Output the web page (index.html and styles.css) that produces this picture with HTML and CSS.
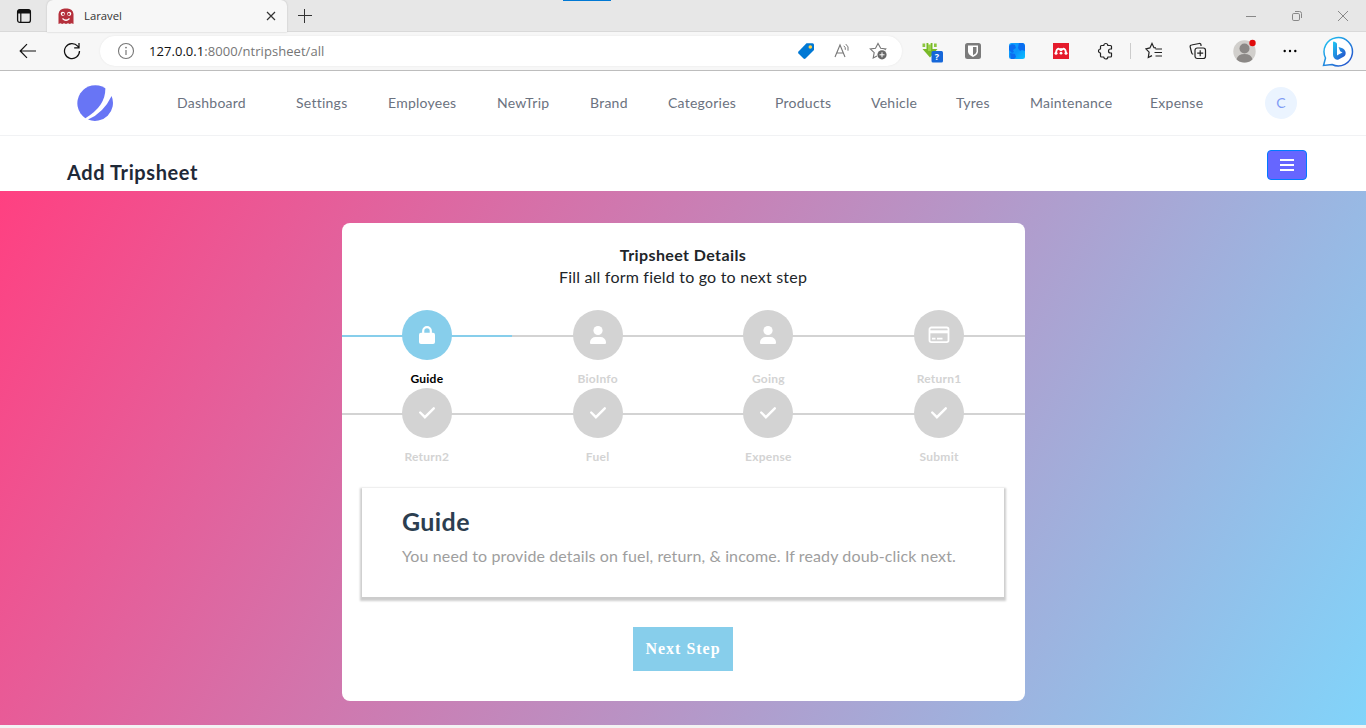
FILE: index.html
```html
<!DOCTYPE html>
<html lang="en">
<head>
<meta charset="utf-8">
<title>Laravel</title>
<link rel="stylesheet" href="styles.css">
</head>
<body>
<div class="browser">
  <div class="tabstrip">
    <span class="load-mark"></span>
    <svg class="workspace" width="16" height="16" viewBox="0 0 16 16"><rect x="1.6" y="1.6" width="12.8" height="12.8" rx="2.2" fill="none" stroke="#111" stroke-width="1.3"/><path d="M1.5 5.5V3.5a2 2 0 0 1 2-2h9a2 2 0 0 1 2 2v2z" fill="#111"/><path d="M4.8 5v9.5" stroke="#111" stroke-width="1.2"/></svg>
    <div class="tab">
      <svg width="16" height="17" viewBox="0 0 16 17"><path d="M.5 16V6A6 6 0 0 1 6.500.5h3A6 6 0 0 1 15.500 6v10l-2-.8-1.700.8-1.800-.8-2 .8-2-.8-1.800.8-1.700-.8z" fill="#b5303c"/><circle cx="4.800" cy="5.800" r="2.100" fill="#fff"/><circle cx="11.200" cy="5.800" r="2.100" fill="#fff"/><circle cx="5.200" cy="6.200" r="1.100" fill="#b5303c"/><circle cx="10.800" cy="6.200" r="1.100" fill="#b5303c"/><path d="M4.500 10.500q3.500 3.500 7 0" fill="none" stroke="#fff" stroke-width="1.200"/></svg>
      <span class="tab-title">Laravel</span>
      <svg class="tab-close" width="10" height="10" viewBox="0 0 10 10"><path d="M1 1l8 8M9 1L1 9" stroke="#333" stroke-width="1.200"/></svg>
    </div>
    <svg class="new-tab" width="16" height="16" viewBox="0 0 16 16"><path d="M1 7.500h14M7.500 1v14" stroke="#333" stroke-width="1"/></svg>
    <div class="window-buttons">
      <svg width="12" height="12" viewBox="0 0 12 12"><path d="M1 6.500h10" stroke="#888"/></svg>
      <svg width="12" height="12" viewBox="0 0 12 12"><rect x="1.500" y="3.500" width="7" height="7" rx="1.300" fill="none" stroke="#888"/><path d="M4 1.500h4.500a2 2 0 0 1 2 2V8" fill="none" stroke="#888"/></svg>
      <svg width="12" height="12" viewBox="0 0 12 12"><path d="M1 1l10 10M11 1L1 11" stroke="#888"/></svg>
    </div>
  </div>
  <div class="toolbar">
    <svg class="back" width="18" height="16" viewBox="0 0 18 16"><path d="M17 8H1.500M8 1.200L1.200 8 8 14.800" fill="none" stroke="#111" stroke-width="1.200"/></svg>
    <svg class="reload" width="18" height="18" viewBox="0 0 18 18"><path d="M16.500 9A7.500 7.500 0 1 1 14.700 4.200L16 5.600M16 1v4.800h-4.800" fill="none" stroke="#111" stroke-width="1.250"/></svg>
    <div class="address">
      <svg width="18" height="18" viewBox="0 0 18 18"><circle cx="9" cy="9" r="7.500" fill="none" stroke="#777" stroke-width="1.100"/><path d="M9 8v5" stroke="#777" stroke-width="1.200"/><circle cx="9" cy="5.600" r=".9" fill="#777"/></svg>
      <span class="url"><b>127.0.0.1</b>:8000/ntripsheet/all</span>
      <div class="address-icons">
        <svg width="18" height="18" viewBox="0 0 18 18"><path d="M1.500 9.500L9.500 1.300H15.500a1.500 1.500 0 0 1 1.500 1.500V8L8.500 16.500a1.500 1.500 0 0 1-2 0l-5-5a1.500 1.500 0 0 1 0-2z" fill="#0078d4"/><circle cx="13.300" cy="5" r="1.800" fill="#ffd24a"/></svg>
        <svg width="18" height="18" viewBox="0 0 18 18"><path d="M2 15L7 3l5 12M3.800 11h6.500" fill="none" stroke="#777" stroke-width="1.100"/><path d="M10.800 3.800q2 1.500 1.500 4M12.800 2.100q3.300 2.300 2.200 6.600" fill="none" stroke="#777"/></svg>
        <svg width="18" height="18" viewBox="0 0 18 18"><path d="M15.700 8l1-1-5-.700L9 1.500 6.500 6.300l-5.200.7 3.900 3.600-1 5.400 3.800-2" fill="none" stroke="#777" stroke-width="1.100"/><circle cx="13" cy="12.800" r="4.600" fill="#666"/><path d="M10.500 12.800h5M13 10.300v5" stroke="#fff"/></svg>
      </div>
    </div>
    <div class="extensions">
      <svg width="24" height="24" viewBox="0 0 24 24"><path d="M6.500 4h6v6h5L10 18.500 2.500 10h4z" fill="#79b928"/><path d="M8 4h3v8H8z" fill="#9bd34c"/><path d="M2.500 4.500h2.700V8H2.500zM14 4.500h2.700V8H14z" fill="#8cc63f"/><path d="M8.500 4h2v1.500h-2z" fill="#fff"/><rect x="11.500" y="12" width="11.500" height="11.500" rx="1.500" fill="#1667d9"/><text x="14.700" y="21.300" class="badge-text">?</text></svg>
      <svg width="16" height="16" viewBox="0 0 16 16"><rect width="16" height="16" rx="2.500" fill="#7b7b7b"/><path d="M3 2.500h10v6q0 3.300-5 5.500-5-2.200-5-5.500z" fill="#fff"/><path d="M8 4h3.500v4.500Q11.500 10.500 8 12.300z" fill="#7b7b7b"/></svg>
      <svg width="16" height="16" viewBox="0 0 16 16"><defs><linearGradient id="sea" x2="1" y2="1"><stop stop-color="#12a8ff"/><stop offset=".5" stop-color="#0a93fb"/><stop offset="1" stop-color="#0cc0ff"/></linearGradient></defs><rect width="16" height="16" rx="2.500" fill="url(#sea)"/><path d="M0 3l3-2 3 1 1 3-3 2 1 2-2 1-3-3zM10 0h4l2 3v5l-3-1-2 1-2-3zM1 10l5 1 1 3-2 2H2z" fill="#0a6df0"/></svg>
      <svg width="16" height="16" viewBox="0 0 16 16"><path d="M0 0h16v16H0z" fill="#e51b2c"/><path d="M3 10q.3-4 2.500-4.300L8 7l2.500-1.300Q12.700 6 13 10" fill="none" stroke="#fff" stroke-width="1.800"/><circle cx="8" cy="6.500" r="1.500" fill="#fff"/><circle cx="3" cy="10.200" r="1.500" fill="#fff"/><circle cx="8" cy="10.200" r="1.400" fill="#fff"/><circle cx="13" cy="10.200" r="1.500" fill="#fff"/></svg>
      <svg class="puzzle" width="18" height="18" viewBox="0 0 18 18"><path d="M4.500 3.500h2.300a2 2 0 0 1 4 0h2.700a1 1 0 0 1 1 1V7h-1a2 2 0 0 0 0 4h1v3a1 1 0 0 1-1 1h-2.700a2 2 0 0 1-4 0H4.500a1 1 0 0 1-1-1v-3a2 2 0 0 1 0-4V4.500a1 1 0 0 1 1-1z" fill="none" stroke="#222" stroke-width="1.200" stroke-linejoin="round"/></svg>
      <span class="divider"></span>
      <svg width="18" height="18" viewBox="0 0 18 18"><path d="M11 5.900L9 5.700 7 1.500 4.900 5.900.9 6.800l3.200 3.400-.8 5.300L7 13.600M10.500 7H17M9.500 10.500H17M10.500 14H17" fill="none" stroke="#222" stroke-width="1.200"/></svg>
      <svg width="18" height="18" viewBox="0 0 18 18"><path d="M12 4V3a1.500 1.500 0 0 0-1.800-1.500L2.500 3A1.500 1.500 0 0 0 1.200 5l1.500 6a1.500 1.500 0 0 0 1.500 1.200" fill="none" stroke="#222" stroke-width="1.200"/><rect x="6" y="6" width="10.500" height="10.500" rx="2.200" fill="none" stroke="#222" stroke-width="1.200"/><path d="M8.200 11.200h6M11.200 8.200v6" stroke="#222" stroke-width="1.200"/></svg>
      <svg width="24" height="24" viewBox="0 0 24 24"><circle cx="11.500" cy="12.500" r="11.200" fill="#d1cfcc"/><circle cx="11.500" cy="9.500" r="5" fill="#8b8886"/><path d="M3.500 20.300q1.500-5.300 8-5.300t8 5.300q-3 3.300-8 3.300t-8-3.300z" fill="#8b8886"/><circle cx="19.500" cy="4" r="3.200" fill="#e00b0b"/></svg>
      <svg class="more" width="16" height="16" viewBox="0 0 16 16"><circle cx="2.700" cy="8" r="1.200"/><circle cx="8" cy="8" r="1.200"/><circle cx="13.300" cy="8" r="1.200"/></svg>
      <svg class="bing" width="32" height="32" viewBox="0 0 32 32"><defs><linearGradient id="bing" x2="1" y2="1"><stop stop-color="#20c9f4"/><stop offset="1" stop-color="#2548c8"/></linearGradient></defs><path d="M1.500 30.500L3.500 23A14.200 14.200 0 1 1 10 29.500z" fill="#fff" stroke="url(#bing)" stroke-width="1.500"/><path d="M11 7.500q0-1.500 1.500-.8l1.500.8q1 .5 1 1.500v11.500l2.500-1.500 3-1.500-2.300-1.200-1.700-4.300q5.500 1 6.800 4.200 1.200 3.300-1.300 5.300L17 24.300q-2 1.200-4-.3-2-1.500-2-4z" fill="url(#bing)"/></svg>
    </div>
  </div>
</div>

<nav class="navbar">
  <svg class="brand" width="36" height="36" viewBox="0 0 36 36"><path d="M8.400 33.200A18 18 0 1 1 28.300 3.200Q29 21 8.400 33.200z" fill="#6875f5"/><path d="M34.600 11A18 18 0 0 1 11 34.500Q26.500 28 34.600 11z" fill="#6875f5"/></svg>
  <div class="nav-links">
    <a class="w-dashboard">Dashboard</a><a class="w-settings">Settings</a><a class="w-employees">Employees</a><a class="w-newtrip">NewTrip</a><a class="w-brand">Brand</a><a class="w-categories">Categories</a><a class="w-products">Products</a><a class="w-vehicle">Vehicle</a><a class="w-tyres">Tyres</a><a class="w-maintenance">Maintenance</a><a class="w-expense">Expense</a>
  </div>
  <span class="avatar">C</span>
</nav>
<header class="page-header">
  <h1>Add Tripsheet</h1>
  <button class="menu-button"><svg width="14" height="12" viewBox="0 0 14 12"><path d="M0 1h14M0 6h14M0 11h14" stroke="#fff" stroke-width="2"/></svg></button>
</header>
<main class="stage">
  <section class="card">
    <h2>Tripsheet Details</h2>
    <p class="hint">Fill all form field to go to next step</p>
    <ul class="steps">
      <li class="active"><span class="dot"><svg width="18" height="20" viewBox="0 0 18 20"><path d="M5.200 9V6a3.800 3.800 0 0 1 7.600 0v3" fill="none" stroke="#fff" stroke-width="2.200"/><rect x="1" y="7.800" width="16" height="11.200" rx="2" fill="#fff"/></svg></span><span>Guide</span></li>
      <li><span class="dot"><svg width="18" height="20" viewBox="0 0 18 20"><circle cx="9" cy="5.500" r="4.600" fill="#fff"/><path d="M1 18v-1a5.500 5.500 0 0 1 5.500-5h5a5.500 5.500 0 0 1 5.500 5v1a1 1 0 0 1-1 1H2a1 1 0 0 1-1-1z" fill="#fff"/></svg></span><span>BioInfo</span></li>
      <li><span class="dot"><svg width="18" height="20" viewBox="0 0 18 20"><circle cx="9" cy="5.500" r="4.600" fill="#fff"/><path d="M1 18v-1a5.500 5.500 0 0 1 5.500-5h5a5.500 5.500 0 0 1 5.500 5v1a1 1 0 0 1-1 1H2a1 1 0 0 1-1-1z" fill="#fff"/></svg></span><span>Going</span></li>
      <li><span class="dot"><svg width="22" height="20" viewBox="0 0 22 20"><rect x="1.500" y="2.500" width="19" height="14.600" rx="1.800" fill="none" stroke="#fff" stroke-width="1.800"/><path d="M1.500 6.800h19" stroke="#fff" stroke-width="3"/><path d="M4 13.600h3.500M9 13.600h5.500" stroke="#fff" stroke-width="1.800"/></svg></span><span>Return1</span></li>
      <li><span class="dot"><svg width="18" height="20" viewBox="0 0 18 20"><path d="M2.200 9.500l4.700 4.700L15.800 5.300" fill="none" stroke="#fff" stroke-width="2.400" stroke-linecap="round"/></svg></span><span>Return2</span></li>
      <li><span class="dot"><svg width="18" height="20" viewBox="0 0 18 20"><path d="M2.200 9.500l4.700 4.700L15.800 5.300" fill="none" stroke="#fff" stroke-width="2.400" stroke-linecap="round"/></svg></span><span>Fuel</span></li>
      <li><span class="dot"><svg width="18" height="20" viewBox="0 0 18 20"><path d="M2.200 9.500l4.700 4.700L15.800 5.300" fill="none" stroke="#fff" stroke-width="2.400" stroke-linecap="round"/></svg></span><span>Expense</span></li>
      <li><span class="dot"><svg width="18" height="20" viewBox="0 0 18 20"><path d="M2.200 9.500l4.700 4.700L15.800 5.300" fill="none" stroke="#fff" stroke-width="2.400" stroke-linecap="round"/></svg></span><span>Submit</span></li>
    </ul>
    <div class="panel">
      <h3>Guide</h3>
      <p>You need to provide details on fuel, return, &amp; income. If ready doub-click next.</p>
    </div>
    <button class="next">Next Step</button>
  </section>
</main>
</body>
</html>
```
FILE: styles.css
```css
* { box-sizing: border-box; }
html, body { height: 728px; overflow: hidden; }
body { margin: 0; background: #f3f3f3; font-family: Lato, "Noto Sans", sans-serif; color: #212529; }
h1, h2, h3, p, ul { margin: 0; padding: 0; }
svg { display: block; flex: none; }
button { padding: 0; }

.browser { height: 71px; border-bottom: 1px solid #bdbdbd; font-family: "Open Sans", sans-serif; }
.tabstrip { position: relative; display: flex; align-items: center; height: 32px; background: #e7e7e7; border-bottom: 1px solid #d9d9d9; }
.load-mark { position: absolute; left: 563px; top: 0; width: 48px; height: 1px; background: #0078d4; }
.workspace { margin-left: 16px; }
.tab { display: flex; align-items: center; align-self: flex-start; width: 240px; height: 32px; margin-left: 15px; padding-left: 11px; background: #f7f7f7; border-radius: 6px 6px 0 0; box-shadow: 0 0 2px #bbb; }
.tab-title { width: 182px; margin-left: 10px; padding-bottom: 1px; font-size: 11.3px; color: #333; }
.new-tab { margin-left: 10px; }
.window-buttons { display: flex; gap: 34px; margin: 0 17px 0 auto; }
.toolbar { display: flex; align-items: center; height: 38px; background: #f7f7f7; }
.back { margin-left: 19px; }
.reload { margin-left: 26px; }
.address { display: flex; align-items: center; width: 802px; height: 30px; margin-left: 19px; padding-left: 17px; border-radius: 15px; background: #fff; box-shadow: 0 0 2px #e4e4e4; }
.url { margin-left: 14px; font-size: 13px; letter-spacing: .05px; color: #767676; white-space: nowrap; }
.url b { font-weight: 400; color: #111; }
.address-icons { display: flex; gap: 18px; margin: 0 15px 0 auto; }
.extensions { display: flex; align-items: center; gap: 26px; margin-left: 18px; }
.extensions > :nth-child(2) { margin-left: -5px; }
.extensions > :nth-child(3), .extensions > :nth-child(4) { margin-left: 2px; }
.puzzle { margin-left: 2px; }
.more { margin-left: -1px; }
.bing { margin-left: -2px; }
.badge-text { font: bold 9px "Open Sans", sans-serif; fill: #fff; }
.divider { width: 1px; height: 16px; background: #ccc; margin: 0 -12px 0 -11px; }

.navbar { display: flex; align-items: center; height: 65px; padding-left: 77px; background: #fff; border-bottom: 1px solid #f1f2f4; }
.nav-links { display: flex; gap: 40px; margin-left: 64px; font-size: 14px; line-height: 20px; letter-spacing: .25px; color: #6b7280; white-space: nowrap; }
.w-dashboard { width: 79px; }
.w-settings { width: 52px; }
.w-employees { width: 69px; }
.w-newtrip { width: 53px; }
.w-brand { width: 38px; }
.w-categories { width: 67px; }
.w-products { width: 56px; }
.w-vehicle { width: 45px; }
.w-tyres { width: 34px; }
.w-maintenance { width: 80px; }
.w-expense { width: 54px; }
.avatar { width: 32px; height: 32px; margin-left: 61px; border-radius: 50%; background: #ebf4ff; color: #7f9cf5; font-size: 14px; line-height: 32px; text-align: center; }
.page-header { display: flex; justify-content: space-between; height: 55px; padding: 14px 59px 0 67px; background: #fff; }
.page-header h1 { margin-top: 10px; font-size: 20px; line-height: 24px; font-weight: 700; letter-spacing: .6px; color: #1f2937; }
.menu-button { display: flex; align-items: center; justify-content: center; width: 40px; height: 30px; border: 1px solid #007bff; border-radius: 4px; background: #6666ff; }

.stage { height: 534px; padding-top: 32px; background: linear-gradient(120deg, #ff4081, #81d4fa); }
.card { width: 683px; height: 478px; margin: 0 auto; padding-top: 21px; border-radius: 8px; background: #fff; text-align: center; }
.card h2 { font-size: 16px; line-height: 22px; font-weight: 700; letter-spacing: .4px; }
.hint { font-size: 16px; line-height: 22px; letter-spacing: .2px; }
.steps { display: grid; grid-template-columns: repeat(4, 1fr); margin-top: 22px; list-style: none; color: lightgrey; font-size: 12px; font-weight: 700; letter-spacing: .25px; }
.steps li { position: relative; display: flex; flex-direction: column; align-items: center; height: 78px; line-height: 18px; }
.steps li::before { content: ""; position: absolute; left: 0; right: 0; top: 25px; height: 2px; background: lightgrey; }
.dot { display: flex; align-items: center; justify-content: center; width: 50px; height: 50px; margin-bottom: 10px; padding-bottom: 1px; border-radius: 50%; background: lightgrey; z-index: 1; }
.steps .active { color: #000; }
.steps .active::before, .active .dot { background: skyblue; }
.panel { width: 642px; height: 109px; margin: 22px 0 0 20px; padding: 18px 40px 0 40.5px; text-align: left; box-shadow: 0 2px 2px 2px rgba(0, 0, 0, .2); }
.panel h3 { font-size: 25px; line-height: 30px; font-weight: 700; letter-spacing: .4px; color: #2c3e50; }
.panel p { margin-top: 8px; font-size: 16px; line-height: 24px; letter-spacing: .115px; color: #9e9e9e; white-space: nowrap; }
.next { width: 100px; height: 44px; margin-top: 30px; border: 0; background: skyblue; color: #fff; font: 700 16px "Liberation Serif", serif; letter-spacing: 1px; }
```
